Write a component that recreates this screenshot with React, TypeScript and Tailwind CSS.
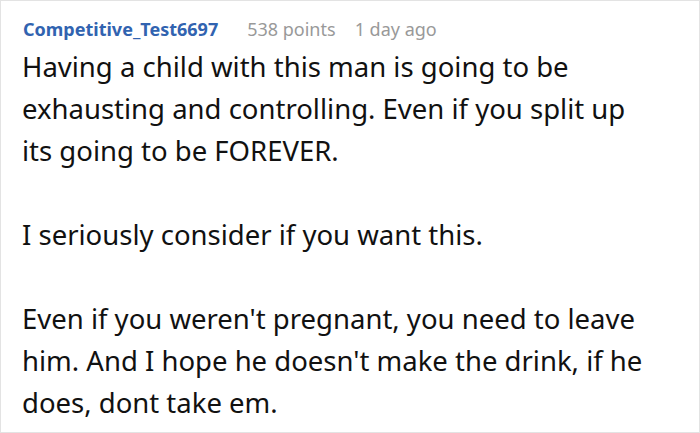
export default function App() {
  return (
    <div className="w-[700px] h-[433px] bg-white border border-[#e3e3e3] overflow-hidden font-['Noto_Sans',sans-serif]">
      <div className="flex items-baseline pl-[22px] pt-[16px] text-[18px] leading-[24px]">
        <span className="font-bold text-[#3163b0]">Competitive_Test6697</span>
        <span className="ml-[29px] text-[#999999]">538 points</span>
        <span className="ml-[19px] text-[#999999]">1 day ago</span>
      </div>
      <div className="pl-[21px] pr-[45px] pt-[5px] text-[27.5px] leading-[42px] text-[#111111]">
        <p>Having a child with this man is going to be exhausting and controlling. Even if you split up its going to be FOREVER.</p>
        <p className="mt-[42px]">I seriously consider if you want this.</p>
        <p className="mt-[42px]">Even if you weren't pregnant, you need to leave him. And I hope he doesn't make the drink, if he does, dont take em.</p>
      </div>
    </div>
  );
}
